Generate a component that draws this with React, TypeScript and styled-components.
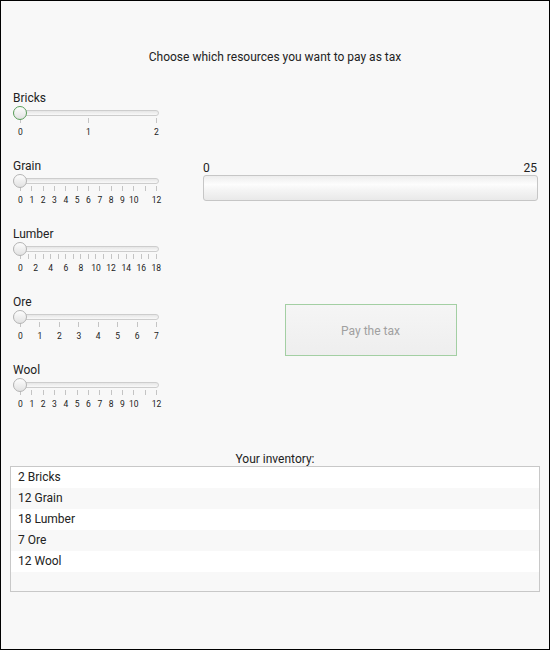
import React from "react";
import styled, { createGlobalStyle } from "styled-components";

const Global = createGlobalStyle`
  html, body { margin: 0; padding: 0; background: #f8f8f8; }
  * { box-sizing: border-box; }
`;

const Frame = styled.div`
  width: 550px;
  height: 650px;
  border: 1px solid #000;
  background: #f8f8f8;
  font-family: Roboto, "Liberation Sans", sans-serif;
  font-size: 12px;
  color: #222;
  display: flex;
  flex-direction: column;
`;

const Title = styled.div`
  margin-top: 49px;
  line-height: 14px;
  text-align: center;
`;

const Main = styled.div`
  display: grid;
  grid-template-columns: 146px 335px;
  column-gap: 44px;
  margin: 26px 0 0 12px;
`;

const SliderColumn = styled.div`
  display: flex;
  flex-direction: column;
  gap: 20px;
`;

const SliderGroup = styled.div`
  display: flex;
  flex-direction: column;
`;

const SliderLabel = styled.div`
  line-height: 14px;
  padding-top: 1px;
`;

const TrackWrap = styled.div`
  position: relative;
  height: 14px;
  margin-top: 1px;
  display: flex;
  align-items: center;
`;

const Track = styled.div`
  width: 100%;
  height: 6px;
  border: 1px solid #cdcdcd;
  border-radius: 3px;
  background: linear-gradient(#e6e6e6, #f9f9f9);
`;

const Thumb = styled.div<{ $focused?: boolean }>`
  position: absolute;
  left: 0;
  top: 0;
  width: 14px;
  height: 14px;
  border-radius: 50%;
  border: 1px solid ${(p) => (p.$focused ? "#5a9e5a" : "#b4b4b4")};
  background: linear-gradient(#fdfdfd, #e2e2e2);
`;

const TickRow = styled.div`
  display: flex;
  justify-content: space-between;
  margin: -2px 2px 0 7px;
`;

const TickItem = styled.div`
  width: 1px;
  display: flex;
  flex-direction: column;
  align-items: center;
`;

const TickLine = styled.div`
  width: 1px;
  height: 5px;
  background: #c4c4c4;
`;

const TickLabel = styled.div`
  margin-top: 4px;
  font-size: 8.5px;
  line-height: 11px;
  white-space: nowrap;
  color: #222;
`;

const RightColumn = styled.div`
  display: flex;
  flex-direction: column;
  padding-top: 71px;
`;

const RangeNums = styled.div`
  display: flex;
  justify-content: space-between;
  line-height: 14px;
  padding: 0 1px 0 0;
`;

const Progress = styled.div`
  height: 26px;
  border: 1px solid #c6c6c6;
  border-radius: 3px;
  background: linear-gradient(#ededed, #fdfdfd 35%, #f4f4f4 60%, #e9e9e9);
`;

const PayButton = styled.button`
  align-self: center;
  margin-top: 103px;
  width: 172px;
  height: 52px;
  border: 1px solid #a3cfa3;
  background: linear-gradient(#f5f5f5, #eeeeee);
  color: #a0a0a0;
  font-family: Roboto, "Liberation Sans", sans-serif;
  font-size: 12px;
  padding: 2px 0 0;
`;

const InventoryTitle = styled.div`
  margin-top: 42px;
  text-align: center;
  line-height: 14px;
`;

const Inventory = styled.div`
  margin: 0 9px;
  height: 126px;
  border: 1px solid #c8c8c8;
  background: #f8f8f8;
`;

const InvRow = styled.div<{ $alt?: boolean }>`
  height: 21px;
  line-height: 21px;
  padding-left: 7px;
  background: ${(p) => (p.$alt ? "#f8f8f8" : "#ffffff")};
`;

type SliderDef = {
  name: string;
  max: number;
  labelEvery: number;
  skip?: number[];
};

const sliders: SliderDef[] = [
  { name: "Bricks", max: 2, labelEvery: 1 },
  { name: "Grain", max: 12, labelEvery: 1, skip: [11] },
  { name: "Lumber", max: 18, labelEvery: 2 },
  { name: "Ore", max: 7, labelEvery: 1 },
  { name: "Wool", max: 12, labelEvery: 1, skip: [11] },
];

const inventory = ["2 Bricks", "12 Grain", "18 Lumber", "7 Ore", "12 Wool"];

function Slider({ def, focused }: { def: SliderDef; focused?: boolean }) {
  const ticks = Array.from({ length: def.max + 1 }, (_, i) => i);
  return (
    <SliderGroup>
      <SliderLabel>{def.name}</SliderLabel>
      <TrackWrap>
        <Track />
        <Thumb $focused={focused} />
      </TrackWrap>
      <TickRow>
        {ticks.map((t) => (
          <TickItem key={t}>
            <TickLine />
            <TickLabel>
              {t % def.labelEvery === 0 && !(def.skip || []).includes(t) ? t : "\u00a0"}
            </TickLabel>
          </TickItem>
        ))}
      </TickRow>
    </SliderGroup>
  );
}

export default function App() {
  return (
    <>
      <Global />
      <Frame>
        <Title>Choose which resources you want to pay as tax</Title>
        <Main>
          <SliderColumn>
            {sliders.map((s, i) => (
              <Slider key={s.name} def={s} focused={i === 0} />
            ))}
          </SliderColumn>
          <RightColumn>
            <RangeNums>
              <span>0</span>
              <span>25</span>
            </RangeNums>
            <Progress />
            <PayButton>Pay the tax</PayButton>
          </RightColumn>
        </Main>
        <InventoryTitle>Your inventory:</InventoryTitle>
        <Inventory>
          {inventory.map((item, i) => (
            <InvRow key={item} $alt={i % 2 === 1}>
              {item}
            </InvRow>
          ))}
        </Inventory>
      </Frame>
    </>
  );
}
